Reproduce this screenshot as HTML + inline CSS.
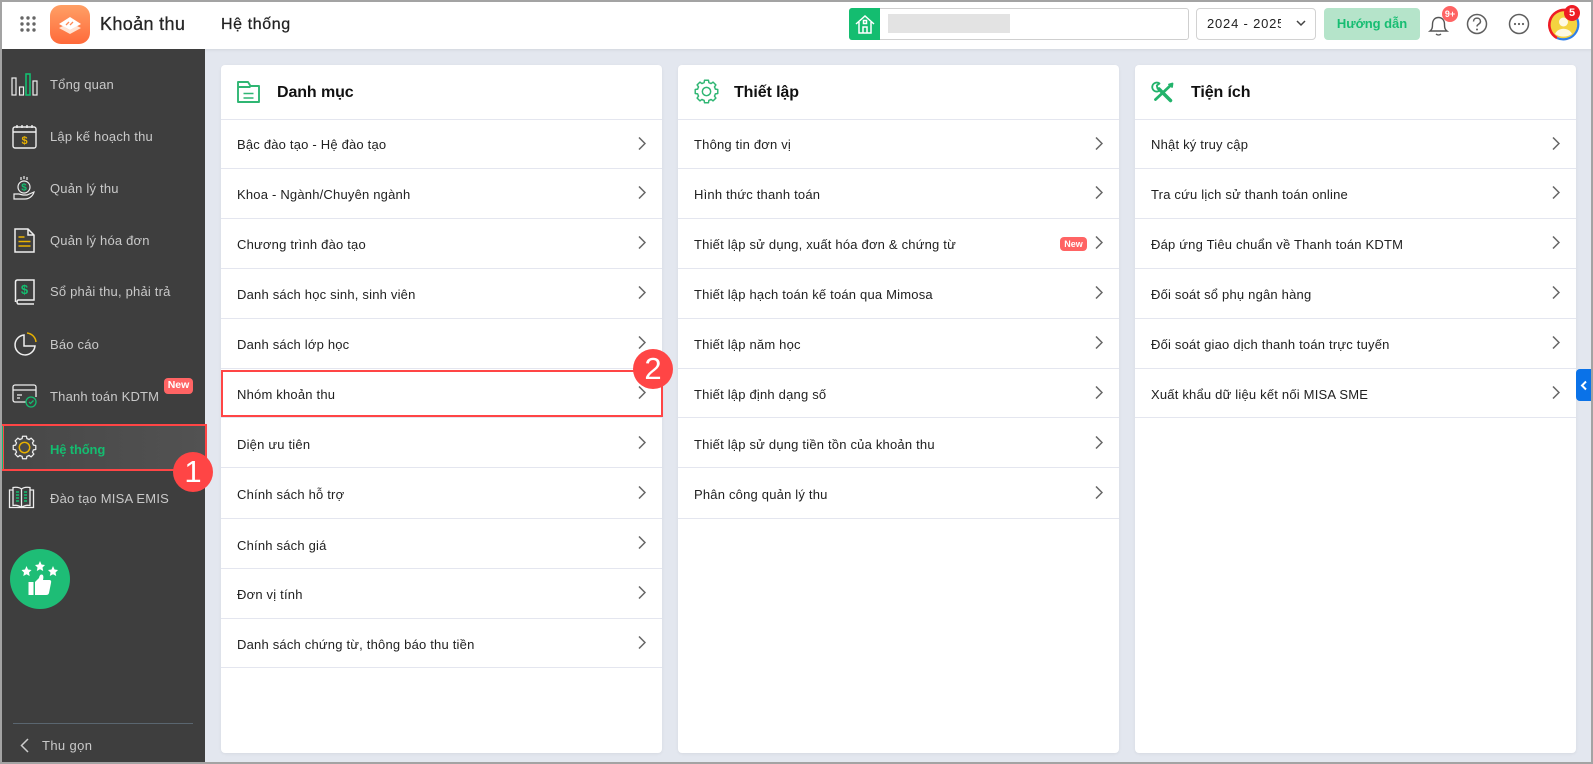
<!DOCTYPE html>
<html lang="vi"><head><meta charset="utf-8"><title>Khoản thu</title>
<style>
*{box-sizing:border-box;margin:0;padding:0}
html,body{width:1593px;height:764px;overflow:hidden;background:#e3e7ef;font-family:"Liberation Sans",sans-serif}
.a{position:absolute}
#frame{position:absolute;inset:0;border:2px solid #a3a3a3;pointer-events:none;z-index:20}
#hd{position:absolute;left:0;top:0;width:1593px;height:49px;background:#fff;box-shadow:0 1px 3px rgba(0,0,0,.08)}
#sb{position:absolute;left:0;top:49px;width:205px;height:715px;background:#3e3e3e}
.m{position:absolute;left:50px;font-size:13px;letter-spacing:.2px;color:#c9c9c9;line-height:20px;white-space:nowrap}
.i{position:absolute;overflow:visible}
.card{position:absolute;top:65px;width:441px;height:688px;background:#fff;border-radius:4px;box-shadow:0 1px 3px rgba(0,0,0,.06)}
.t{position:absolute;left:56px;top:17px;font-size:16px;font-weight:bold;line-height:22px;color:#111;letter-spacing:-.1px}
.l{position:absolute;left:0;width:100%;height:1px;background:#e4e6ef}
.r{position:absolute;left:16px;font-size:13px;letter-spacing:.2px;color:#212121;line-height:20px;white-space:nowrap}
.c{position:absolute;left:417px;width:8px;height:13px}
.b{position:absolute;border-radius:50%;background:#ff4545;color:#fff;text-align:center}
</style></head><body>

<div id="hd">
<svg class="i" style="left:20px;top:16px" width="17" height="17" fill="#666"><circle cx="2" cy="2" r="1.7"/><circle cx="8" cy="2" r="1.7"/><circle cx="14" cy="2" r="1.7"/><circle cx="2" cy="8" r="1.7"/><circle cx="8" cy="8" r="1.7"/><circle cx="14" cy="8" r="1.7"/><circle cx="2" cy="14" r="1.7"/><circle cx="8" cy="14" r="1.7"/><circle cx="14" cy="14" r="1.7"/></svg>
<div class="a" style="left:50px;top:5px;width:40px;height:39px;border-radius:11px;background:linear-gradient(180deg,#ffa066,#ff6a3a)"></div>
<svg class="i" style="left:58px;top:16px" width="24" height="20"><path d="M1 12l11 6 11-6-4-2-7 4-7-4z" fill="#ffe3d3"/><path d="M12 1L1 8l11 6 11-6z" fill="#fff"/><path d="M8 9l3-3M12 9l3-3" stroke="#ff8a55" stroke-width="1.300"/></svg>
<div class="a" style="left:100px;top:13px;font-size:18px;line-height:22px;color:#262626;letter-spacing:.35px;-webkit-text-stroke:.3px #262626">Khoản thu</div>
<div class="a" style="left:221px;top:14px;font-size:16px;line-height:22px;color:#222;letter-spacing:.6px;-webkit-text-stroke:.25px #222">Hệ thống</div>

<div class="a" style="left:849px;top:8px;width:340px;height:32px;border:1px solid #cfcfcf;border-radius:3px"></div>
<div class="a" style="left:849px;top:8px;width:31px;height:32px;background:#14bd70;border-radius:3px 0 0 3px"></div>
<svg class="i" style="left:855px;top:14px" width="20" height="20" fill="none" stroke="#fff" stroke-width="1.500"><path d="M1 10L10 2l9 8M4 8v11h12V8M8 19v-6h4v6"/><rect x="8.500" y="6.500" width="3" height="3"/></svg>
<div class="a" style="left:888px;top:14px;width:122px;height:19px;background:#e3e3e3"></div>

<div class="a" style="left:1196px;top:8px;width:120px;height:32px;border:1px solid #d2d2d2;border-radius:4px"></div>
<div class="a" style="left:1207px;top:14px;width:74px;height:20px;overflow:hidden;font-size:13px;line-height:20px;color:#222;letter-spacing:.8px;white-space:nowrap">2024 - 2025</div>
<svg class="i" style="left:1296px;top:20px" width="10" height="7" fill="none" stroke="#444" stroke-width="1.500"><path d="M1 1l4 4 4-4"/></svg>
<div class="a" style="left:1324px;top:8px;width:96px;height:32px;background:#b5e4ca;border-radius:4px;text-align:center;font-size:13px;font-weight:bold;line-height:32px;color:#17bd72;letter-spacing:-.05px">Hướng dẫn</div>

<svg class="i" style="left:1428px;top:14px" width="22" height="22" fill="none" stroke="#555" stroke-width="1.400"><path d="M2 17c2-1.500 2.500-3 2.500-6.500C4.500 6 7 3.500 10.500 3.500S16.500 6 16.500 10.500c0 3.500.5 5 2.500 6.500z"/><path d="M8 20c1.500 1.300 3.500 1.300 5 0"/></svg>
<div class="b" style="left:1442px;top:6px;width:16px;height:16px;background:#ff6464;font-size:9px;font-weight:bold;line-height:16px">9+</div>
<svg class="i" style="left:1466px;top:13px" width="22" height="22" fill="none" stroke="#5f5f5f" stroke-width="1.500"><circle cx="11" cy="11" r="9.500"/><path d="M7.500 8.500c0-4.500 7-4.500 7 0 0 2.800-3.500 2.500-3.500 5"/><circle cx="11" cy="16.500" r="1" fill="#5f5f5f" stroke="none"/></svg>
<svg class="i" style="left:1508px;top:13px" width="22" height="22" fill="none" stroke="#5f5f5f" stroke-width="1.500"><circle cx="11" cy="11" r="9.500"/><g fill="#5f5f5f" stroke="none"><circle cx="7" cy="11" r="1.100"/><circle cx="11" cy="11" r="1.100"/><circle cx="15" cy="11" r="1.100"/></g></svg>
<svg class="i" style="left:1547px;top:8px" width="33" height="33"><circle cx="16.500" cy="16.500" r="14" fill="#f4d340"/><circle cx="16.500" cy="14" r="4.500" fill="#fff" fill-opacity=".85"/><path d="M8 26c3-7 14-7 17 0-5 3.500-12 3.500-17 0z" fill="#fff" fill-opacity=".85"/><path d="M28 7A15 15 0 0 1 10 30" fill="none" stroke="#2f7fe8" stroke-width="2.200"/><path d="M10 30A15 15 0 0 1 19 2" fill="none" stroke="#ee1c25" stroke-width="2.600"/></svg>
<div class="b" style="left:1564px;top:5px;width:16px;height:16px;font-size:11px;font-weight:bold;line-height:16px;background:#ee1c25">5</div>
</div>

<div id="sb"></div>
<div class="a" style="left:2px;top:424px;width:205px;height:47px;background:linear-gradient(90deg,#474747,#525252)"></div>
<div class="a" style="left:2px;top:424px;width:205px;height:47px;border:2px solid #ff4545"></div>
<div class="a" style="left:2px;top:426px;width:1px;height:43px;background:#14bd70"></div>

<div class="m" style="top:75px">Tổng quan</div>
<div class="m" style="top:127px">Lập kế hoạch thu</div>
<div class="m" style="top:179px">Quản lý thu</div>
<div class="m" style="top:231px">Quản lý hóa đơn</div>
<div class="m" style="top:282px">Sổ phải thu, phải trả</div>
<div class="m" style="top:335px">Báo cáo</div>
<div class="m" style="top:387px">Thanh toán KDTM</div>
<div class="m" style="top:440px;color:#14bd70;font-weight:bold;letter-spacing:-.15px">Hệ thống</div>
<div class="m" style="top:489px">Đào tạo MISA EMIS</div>

<svg class="i" style="left:11px;top:73px" width="27" height="23" fill="none" stroke="#eee" stroke-width="1.200"><rect x="1" y="5" width="4" height="17"/><rect x="8.500" y="14" width="4" height="8"/><rect x="15" y="1" width="4" height="21" stroke="#14bd70" stroke-width="1.600"/><rect x="22" y="8" width="4" height="14"/></svg>
<svg class="i" style="left:12px;top:123px" width="25" height="26" fill="none" stroke="#eee" stroke-width="1.400"><rect x="1" y="4" width="23" height="21" rx="2"/><path d="M1 9h23M5 2v3M10 2v3M15 2v3M20 2v3"/><text x="12.500" y="21" font-size="11" font-weight="bold" fill="#e8b100" stroke="none" text-anchor="middle" font-family="Liberation Sans">$</text></svg>
<svg class="i" style="left:13px;top:175px" width="23" height="26" fill="none" stroke="#eee" stroke-width="1.200"><circle cx="11" cy="12" r="6"/><path d="M11 1v3M8 2v3M14 2v3M1 19h5l4 1h4l7-3c-1 4-5 7-9 7H1z"/><text x="11" y="15.500" font-size="10" font-weight="bold" fill="#14bd70" stroke="none" text-anchor="middle" font-family="Liberation Sans">$</text></svg>
<svg class="i" style="left:14px;top:228px" width="21" height="25" fill="none" stroke="#eee" stroke-width="1.500"><path d="M1 1h13l6 6v17H1zM14 1v6h6"/><path d="M4.500 9h6M4.500 13.500h12M4.500 18h12" stroke="#e8b100"/></svg>
<svg class="i" style="left:14px;top:279px" width="21" height="26" fill="none" stroke="#eee" stroke-width="1.500"><path d="M3 1h17v20H4a2.500 2.500 0 0 0 0 4h16M1.500 23V3A2 2 0 0 1 3 1"/><text x="10.500" y="15" font-size="13" font-weight="bold" fill="#14bd70" stroke="none" text-anchor="middle" font-family="Liberation Sans">$</text></svg>
<svg class="i" style="left:13px;top:332px" width="24" height="24" fill="none" stroke="#eee" stroke-width="1.500"><path d="M11 3a10 10 0 1 0 11 11H11z"/><path d="M14 1a10 10 0 0 1 9 9" stroke="#e8b100"/></svg>
<svg class="i" style="left:12px;top:384px" width="26" height="24" fill="none" stroke="#eee" stroke-width="1.300"><path d="M14 18H3a2 2 0 0 1-2-2V3a2 2 0 0 1 2-2h19a2 2 0 0 1 2 2v10M1 6h23M5 11h5M5 14h3"/><circle cx="19" cy="18" r="5" stroke="#14bd70" fill="#3e3e3e"/><path d="M17 18l1.500 1.500 3-3" stroke="#14bd70"/></svg>
<svg class="i" style="left:12px;top:435px" width="25" height="25" viewBox="0 0 24 24" fill="none" stroke="#eee" stroke-width="1.200" stroke-linejoin="round"><path d="M9.720 3.500L10.090 1.170H13.910L14.280 3.500A8.800 8.800 0 0 1 16.400 4.380L18.310 2.990 21.010 5.690 19.620 7.600A8.800 8.800 0 0 1 20.500 9.720L22.830 10.090V13.910L20.500 14.280A8.800 8.800 0 0 1 19.620 16.400L21.010 18.310 18.310 21.010 16.400 19.620A8.800 8.800 0 0 1 14.280 20.500L13.910 22.830H10.090L9.720 20.500A8.800 8.800 0 0 1 7.600 19.620L5.690 21.010 2.990 18.310 4.380 16.400A8.800 8.800 0 0 1 3.500 14.280L1.170 13.910V10.090L3.500 9.720A8.800 8.800 0 0 1 4.380 7.600L2.990 5.690 5.690 2.990 7.600 4.380A8.800 8.800 0 0 1 9.720 3.500Z"/><circle cx="12" cy="12" r="5" stroke="#e8b100" stroke-width="1.400"/></svg>
<svg class="i" style="left:8px;top:486px" width="27" height="23" fill="none" stroke="#eee" stroke-width="1.300"><path d="M13.500 3C11 1 8 1 5 1.500v18c3-.5 6 0 8.500 2 2.500-2 5.500-2.500 8.500-2v-18C19 1 16 1 13.500 3zM13.500 3v18M5 4H1.500v17.500h24V4H22"/><path d="M8 6h3M8 9h3M8 12h3M8 15h3M16 6h3M16 9h3M16 12h3M16 15h3" stroke="#14bd70" stroke-width="1.400"/></svg>

<div class="a" style="left:164px;top:378px;width:29px;height:16px;background:#ff6464;border-radius:4px;color:#fff;font-size:10.500px;font-weight:bold;text-align:center;line-height:15px">New</div>

<div class="b" style="left:10px;top:549px;width:60px;height:60px;background:#1ebd76"></div>
<svg class="i" style="left:20px;top:560px" width="40" height="38" fill="#fff"><polygon points="6.500,6 8,9.500 11.500,10 9,12.500 9.700,16 6.500,14.200 3.300,16 4,12.500 1.500,10 5,9.500"/><polygon points="20,1 21.500,4.500 25,5 22.500,7.500 23.200,11 20,9.200 16.800,11 17.500,7.500 15,5 18.500,4.500"/><polygon points="33,6 34.500,9.500 38,10 35.500,12.500 36.200,16 33,14.200 29.800,16 30.500,12.500 28,10 31.500,9.500"/><rect x="8.500" y="22" width="5" height="13"/><path d="M15 22l4-4c.5-2 1-3.500 2.500-3.500S24 16 23 20h6c2 0 2.500 1 2 3l-2 10c-.5 1.500-1.500 2-3 2H15z"/></svg>

<div class="a" style="left:13px;top:723px;width:180px;height:1px;background:#5a6670"></div>
<svg class="i" style="left:20px;top:738px" width="9" height="15" fill="none" stroke="#ccc" stroke-width="1.500"><path d="M8 1L1.500 7.500 8 14"/></svg>
<div class="m" style="left:42px;top:736px;letter-spacing:.38px">Thu gọn</div>

<div class="card" style="left:221px">
<svg class="i" style="left:16px;top:16px" width="23" height="22" fill="none" stroke="#2fb673" stroke-width="1.900" stroke-linejoin="round"><path d="M1 1H11L13.500 5H22V21H1ZM1 6H13.500"/><path d="M6.500 12.500H16.500M6.500 17H16.500" stroke-width="1.500"/></svg>
<div class="t">Danh mục</div>
<div class="l" style="top:54px"></div>
<div class="r" style="top:70px">Bậc đào tạo - Hệ đào tạo</div>
<svg class="c" style="top:72px" fill="none" stroke="#666" stroke-width="1.500"><path d="M1 .5l6 6-6 6"/></svg><div class="l" style="top:103px"></div>
<div class="r" style="top:120px">Khoa - Ngành/Chuyên ngành</div>
<svg class="c" style="top:121px" fill="none" stroke="#666" stroke-width="1.500"><path d="M1 .5l6 6-6 6"/></svg><div class="l" style="top:153px"></div>
<div class="r" style="top:170px">Chương trình đào tạo</div>
<svg class="c" style="top:171px" fill="none" stroke="#666" stroke-width="1.500"><path d="M1 .5l6 6-6 6"/></svg><div class="l" style="top:203px"></div>
<div class="r" style="top:220px">Danh sách học sinh, sinh viên</div>
<svg class="c" style="top:221px" fill="none" stroke="#666" stroke-width="1.500"><path d="M1 .5l6 6-6 6"/></svg><div class="l" style="top:253px"></div>
<div class="r" style="top:270px">Danh sách lớp học</div>
<svg class="c" style="top:271px" fill="none" stroke="#666" stroke-width="1.500"><path d="M1 .5l6 6-6 6"/></svg><div class="l" style="top:303px"></div>
<div class="r" style="top:320px">Nhóm khoản thu</div>
<svg class="c" style="top:321px" fill="none" stroke="#666" stroke-width="1.500"><path d="M1 .5l6 6-6 6"/></svg><div class="l" style="top:352px"></div>
<div class="r" style="top:370px">Diện ưu tiên</div>
<svg class="c" style="top:371px" fill="none" stroke="#666" stroke-width="1.500"><path d="M1 .5l6 6-6 6"/></svg><div class="l" style="top:402px"></div>
<div class="r" style="top:420px">Chính sách hỗ trợ</div>
<svg class="c" style="top:421px" fill="none" stroke="#666" stroke-width="1.500"><path d="M1 .5l6 6-6 6"/></svg><div class="l" style="top:453px"></div>
<div class="r" style="top:471px">Chính sách giá</div>
<svg class="c" style="top:471px" fill="none" stroke="#666" stroke-width="1.500"><path d="M1 .5l6 6-6 6"/></svg><div class="l" style="top:503px"></div>
<div class="r" style="top:520px">Đơn vị tính</div>
<svg class="c" style="top:521px" fill="none" stroke="#666" stroke-width="1.500"><path d="M1 .5l6 6-6 6"/></svg><div class="l" style="top:553px"></div>
<div class="r" style="top:570px">Danh sách chứng từ, thông báo thu tiền</div>
<svg class="c" style="top:571px" fill="none" stroke="#666" stroke-width="1.500"><path d="M1 .5l6 6-6 6"/></svg><div class="l" style="top:602px"></div>
</div>

<div class="card" style="left:678px">
<svg class="i" style="left:15.500px;top:14px" width="25" height="25" viewBox="0 0 24 24" fill="none" stroke="#2fb673" stroke-width="1.400" stroke-linejoin="round"><path d="M9.720 3.500L10.090 1.170H13.910L14.280 3.500A8.800 8.800 0 0 1 16.400 4.380L18.310 2.990 21.010 5.690 19.620 7.600A8.800 8.800 0 0 1 20.500 9.720L22.830 10.090V13.910L20.500 14.280A8.800 8.800 0 0 1 19.620 16.400L21.010 18.310 18.310 21.010 16.400 19.620A8.800 8.800 0 0 1 14.280 20.500L13.910 22.830H10.090L9.720 20.500A8.800 8.800 0 0 1 7.600 19.620L5.690 21.010 2.990 18.310 4.380 16.400A8.800 8.800 0 0 1 3.500 14.280L1.170 13.910V10.090L3.500 9.720A8.800 8.800 0 0 1 4.380 7.600L2.990 5.690 5.690 2.990 7.600 4.380A8.800 8.800 0 0 1 9.720 3.500Z"/><circle cx="12" cy="12" r="4"/></svg>
<div class="t">Thiết lập</div>
<div class="l" style="top:54px"></div>
<div class="r" style="top:70px">Thông tin đơn vị</div>
<svg class="c" style="top:72px" fill="none" stroke="#666" stroke-width="1.500"><path d="M1 .5l6 6-6 6"/></svg><div class="l" style="top:103px"></div>
<div class="r" style="top:120px">Hình thức thanh toán</div>
<svg class="c" style="top:121px" fill="none" stroke="#666" stroke-width="1.500"><path d="M1 .5l6 6-6 6"/></svg><div class="l" style="top:153px"></div>
<div class="r" style="top:170px">Thiết lập sử dụng, xuất hóa đơn &amp; chứng từ</div>
<div class="a" style="left:382px;top:172px;width:27px;height:14px;background:#ff6464;border-radius:4px;color:#fff;font-size:9px;font-weight:bold;text-align:center;line-height:14px">New</div>
<svg class="c" style="top:171px" fill="none" stroke="#666" stroke-width="1.500"><path d="M1 .5l6 6-6 6"/></svg><div class="l" style="top:203px"></div>
<div class="r" style="top:220px">Thiết lập hạch toán kế toán qua Mimosa</div>
<svg class="c" style="top:221px" fill="none" stroke="#666" stroke-width="1.500"><path d="M1 .5l6 6-6 6"/></svg><div class="l" style="top:253px"></div>
<div class="r" style="top:270px">Thiết lập năm học</div>
<svg class="c" style="top:271px" fill="none" stroke="#666" stroke-width="1.500"><path d="M1 .5l6 6-6 6"/></svg><div class="l" style="top:303px"></div>
<div class="r" style="top:320px">Thiết lập định dạng số</div>
<svg class="c" style="top:321px" fill="none" stroke="#666" stroke-width="1.500"><path d="M1 .5l6 6-6 6"/></svg><div class="l" style="top:352px"></div>
<div class="r" style="top:370px">Thiết lập sử dụng tiền tồn của khoản thu</div>
<svg class="c" style="top:371px" fill="none" stroke="#666" stroke-width="1.500"><path d="M1 .5l6 6-6 6"/></svg><div class="l" style="top:402px"></div>
<div class="r" style="top:420px">Phân công quản lý thu</div>
<svg class="c" style="top:421px" fill="none" stroke="#666" stroke-width="1.500"><path d="M1 .5l6 6-6 6"/></svg><div class="l" style="top:453px"></div>
</div>

<div class="card" style="left:1135px">
<svg class="i" style="left:17px;top:17px" width="22" height="21" fill="none" stroke="#22b36b" stroke-linecap="round" stroke-linejoin="round"><path d="M7 7L18.500 18.500" stroke-width="3.500"/><path d="M7.500 1.500A4.500 4.500 0 1 0 8.500 7.500L5.500 6.500 4.800 3.500Z" stroke-width="1.800"/><path d="M18.500 3.500L3.500 17.500" stroke-width="2.800"/><path d="M17 2.500L20.500 1.500 20 5" stroke-width="1.800"/></svg>
<div class="t">Tiện ích</div>
<div class="l" style="top:54px"></div>
<div class="r" style="top:70px">Nhật ký truy cập</div>
<svg class="c" style="top:72px" fill="none" stroke="#666" stroke-width="1.500"><path d="M1 .5l6 6-6 6"/></svg><div class="l" style="top:103px"></div>
<div class="r" style="top:120px">Tra cứu lịch sử thanh toán online</div>
<svg class="c" style="top:121px" fill="none" stroke="#666" stroke-width="1.500"><path d="M1 .5l6 6-6 6"/></svg><div class="l" style="top:153px"></div>
<div class="r" style="top:170px">Đáp ứng Tiêu chuẩn về Thanh toán KDTM</div>
<svg class="c" style="top:171px" fill="none" stroke="#666" stroke-width="1.500"><path d="M1 .5l6 6-6 6"/></svg><div class="l" style="top:203px"></div>
<div class="r" style="top:220px">Đối soát sổ phụ ngân hàng</div>
<svg class="c" style="top:221px" fill="none" stroke="#666" stroke-width="1.500"><path d="M1 .5l6 6-6 6"/></svg><div class="l" style="top:253px"></div>
<div class="r" style="top:270px">Đối soát giao dịch thanh toán trực tuyến</div>
<svg class="c" style="top:271px" fill="none" stroke="#666" stroke-width="1.500"><path d="M1 .5l6 6-6 6"/></svg><div class="l" style="top:303px"></div>
<div class="r" style="top:320px">Xuất khẩu dữ liệu kết nối MISA SME</div>
<svg class="c" style="top:321px" fill="none" stroke="#666" stroke-width="1.500"><path d="M1 .5l6 6-6 6"/></svg><div class="l" style="top:352px"></div>
</div>

<div class="a" style="left:1576px;top:369px;width:15px;height:32px;background:#0a72e8;border-radius:4px 0 0 4px"></div>
<svg class="i" style="left:1581px;top:381px" width="6" height="9" fill="none" stroke="#fff" stroke-width="2"><path d="M5 .5L1 4.500l4 4"/></svg>

<div class="a" style="left:221px;top:370px;width:442px;height:47px;border:2px solid #ff4545;z-index:5"></div>
<div class="b" style="left:173px;top:452px;width:40px;height:40px;font-size:31px;line-height:40px;z-index:6">1</div>
<div class="b" style="left:633px;top:349px;width:40px;height:40px;font-size:31px;line-height:40px;z-index:6">2</div>
<div id="frame"></div>
</body></html>
